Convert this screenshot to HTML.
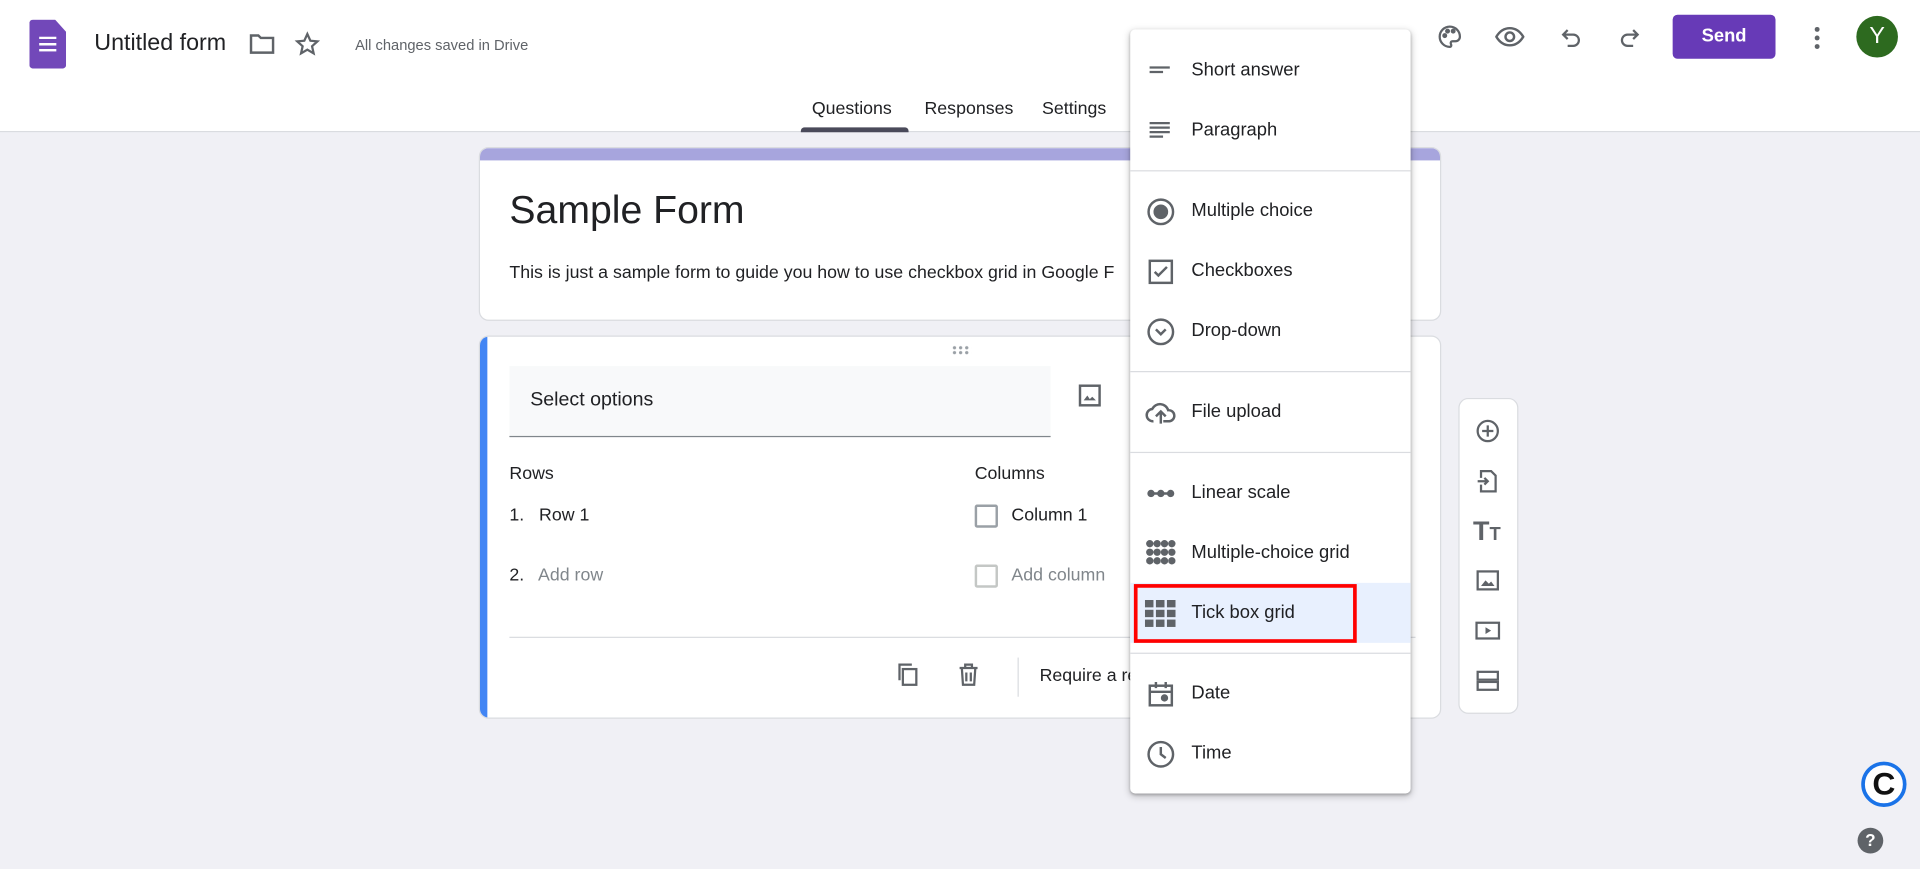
<!DOCTYPE html>
<html><head><meta charset="utf-8"><style>
*{box-sizing:border-box;margin:0;padding:0}
html,body{width:1920px;height:869px;overflow:hidden;background:#f0f0f5;font-family:"Liberation Sans",Arial,sans-serif;color:#202124}
#w{position:absolute;left:0;top:0;width:1568px;height:710px;transform:scale(1.22449);transform-origin:0 0}
.a{position:absolute}
.hdr{left:0;top:0;width:1568px;height:108px;background:#fff;border-bottom:1px solid #dadce0}
.t{white-space:nowrap}
svg.i{position:absolute;fill:none;stroke:#5f6368;stroke-width:2}
.card{background:#fff;border:1px solid #dadce0;border-radius:8px}
.menu{left:923px;top:24px;width:229px;height:624px;background:#fff;border-radius:4px;box-shadow:0 2px 6px rgba(0,0,0,.25),0 1px 2px rgba(0,0,0,.2)}
.mi{position:absolute;left:50px;font-size:15px;color:#202124;transform:translateY(-50%)}
.dv{position:absolute;left:0;width:229px;height:1px;background:#dadce0}
</style></head><body><div id="w">
<div class="a hdr"></div>
<div class="a" style="left:24px;top:16px;width:30px;height:40px;background:#7248b9;border-radius:3px;clip-path:polygon(0 0,70% 0,100% 25%,100% 100%,0 100%)"></div>
<div class="a" style="left:32px;top:30px;width:14px;height:12px;background:repeating-linear-gradient(#fff 0 2px,transparent 2px 5px)"></div>
<div class="a t" style="left:77px;top:25px;font-size:19px">Untitled form</div>
<svg class="i" style="left:203px;top:26px" width="22" height="20" viewBox="0 0 22 20"><path d="M2 3h6l2 2h10v12H2z"/></svg>
<svg class="i" style="left:240px;top:25px" width="22" height="22" viewBox="0 0 24 24"><path d="M12 3l2.7 6 6.3.6-4.8 4.3 1.4 6.4L12 17l-5.6 3.3 1.4-6.4L3 9.6 9.3 9z"/></svg>
<div class="a t" style="left:290px;top:30px;font-size:12px;color:#5f6368">All changes saved in Drive</div>
<div class="a t" style="left:663px;top:81px;font-size:14.5px;color:#202124">Questions</div>
<div class="a" style="left:654px;top:104px;width:88px;height:4px;background:#4a4a5a;border-radius:3px 3px 0 0"></div>
<div class="a t" style="left:755px;top:81px;font-size:14.5px">Responses</div>
<div class="a t" style="left:851px;top:81px;font-size:14.5px">Settings</div>
<svg class="i" style="left:1173px;top:19px" width="22" height="22" viewBox="0 0 24 24"><path d="M12 3a9 9 0 000 18c1.5 0 1.5-1.5 1-2.5-.6-1.2.2-2.5 1.5-2.5H17a4 4 0 004-4c0-5-4-9-9-9z"/><circle cx="7.5" cy="11" r="1.2" fill="#5f6368"/><circle cx="10" cy="7" r="1.2" fill="#5f6368"/><circle cx="15" cy="7" r="1.2" fill="#5f6368"/></svg>
<svg class="i" style="left:1221px;top:20px" width="24" height="20" viewBox="0 0 24 20"><path d="M1 10c3-5 7-7 11-7s8 2 11 7c-3 5-7 7-11 7S4 15 1 10z"/><circle cx="12" cy="10" r="3.5"/></svg>
<svg class="i" style="left:1272px;top:20px" width="22" height="22" viewBox="0 0 24 24"><path d="M9 5L5 9l4 4M5 9h9a5 5 0 010 10H9"/></svg>
<svg class="i" style="left:1320px;top:20px" width="22" height="22" viewBox="0 0 24 24"><path d="M15 5l4 4-4 4M19 9h-9a5 5 0 000 10h5"/></svg>
<div class="a" style="left:1366px;top:12px;width:84px;height:36px;background:#673ab7;border-radius:4px;color:#fff;font-size:15px;font-weight:bold;text-align:center;line-height:36px">Send</div>
<div class="a" style="left:1482px;top:22px;width:4px;height:4px;background:#5f6368;border-radius:50%;box-shadow:0 7px 0 #5f6368,0 14px 0 #5f6368"></div>
<div class="a" style="left:1516px;top:13px;width:34px;height:34px;border-radius:50%;background:#2d6a1f;color:#fff;font-size:19px;text-align:center;line-height:34px">Y</div>

<div class="a card" style="left:391px;top:120px;width:786px;height:142px;overflow:hidden"><div style="height:10px;background:#a7a5dd"></div></div>
<div class="a t" style="left:416px;top:153px;font-size:32px">Sample Form</div>
<div class="a t" style="left:416px;top:215px;font-size:14.5px">This is just a sample form to guide you how to use checkbox grid in Google F</div>

<div class="a card" style="left:391px;top:274px;width:786px;height:313px;overflow:hidden"><div style="position:absolute;left:0;top:0;width:6px;height:100%;background:#4285f4"></div></div>
<div class="a" style="left:777px;top:282px;width:16px;height:8px;background:radial-gradient(circle,#9aa0a6 1.2px,transparent 1.5px) 0 0/5px 4px"></div>
<div class="a" style="left:416px;top:299px;width:442px;height:58px;background:#f8f9fa;border-bottom:1px solid #80868b"></div>
<div class="a t" style="left:433px;top:318px;font-size:16px">Select options</div>
<svg class="i" style="left:880px;top:313px" width="20" height="20" viewBox="0 0 20 20"><rect x="2" y="2" width="16" height="16"/><path d="M5 14l3-4 2 3 2-2 3 3z" fill="#5f6368" stroke="none"/></svg>
<div class="a t" style="left:416px;top:379px;font-size:14.5px">Rows</div>
<div class="a t" style="left:796px;top:379px;font-size:14.5px">Columns</div>
<div class="a t" style="left:416px;top:413px;font-size:14.5px">1.&nbsp;&nbsp; Row 1</div>
<div class="a t" style="left:416px;top:462px;font-size:14.5px;color:#202124">2.&nbsp;&nbsp; <span style="color:#80868b">Add row</span></div>
<div class="a" style="left:796px;top:412px;width:19px;height:19px;border:2px solid #9aa0a6;border-radius:2px"></div>
<div class="a t" style="left:826px;top:413px;font-size:14.5px">Column 1</div>
<div class="a" style="left:796px;top:461px;width:19px;height:19px;border:2px solid #c4c7c5;border-radius:2px"></div>
<div class="a t" style="left:826px;top:462px;font-size:14.5px;color:#80868b">Add column</div>
<div class="a" style="left:416px;top:520px;width:740px;height:1px;background:#dadce0"></div>
<svg class="i" style="left:730px;top:540px" width="22" height="22" viewBox="0 0 24 24"><rect x="8" y="7" width="12" height="14"/><path d="M5 17V3h11"/></svg>
<svg class="i" style="left:780px;top:540px" width="22" height="22" viewBox="0 0 24 24"><path d="M4 6h16M9 6V3h6v3M6 6l1 15h10l1-15M10 10v8M14 10v8"/></svg>
<div class="a" style="left:831px;top:537px;width:1px;height:32px;background:#dadce0"></div>
<div class="a t" style="left:849px;top:544px;font-size:14.5px">Require a re</div>

<div class="a card" style="left:1191px;top:325px;width:49px;height:258px;border-radius:8px"></div>
<svg class="i" style="left:1204px;top:341px" width="22" height="22" viewBox="0 0 24 24"><circle cx="12" cy="12" r="9"/><path d="M12 7v10M7 12h10"/></svg>
<svg class="i" style="left:1204px;top:382px" width="22" height="22" viewBox="0 0 24 24"><path d="M6 9V3h9l4 4v14H6v-6M3 12h9M9 9l3 3-3 3"/></svg>
<div class="a t" style="left:1203px;top:421px;font-size:22px;font-weight:bold;color:#5f6368">T<span style="font-size:15px">T</span></div>
<svg class="i" style="left:1204px;top:463px" width="22" height="22" viewBox="0 0 24 24"><rect x="3" y="4" width="18" height="16"/><path d="M6 17l4-5 3 3 2-2 3 4z" fill="#5f6368" stroke="none"/></svg>
<svg class="i" style="left:1204px;top:504px" width="22" height="22" viewBox="0 0 24 24"><rect x="2" y="5" width="20" height="14"/><path d="M10 9v6l5-3z" fill="#5f6368" stroke="none"/></svg>
<svg class="i" style="left:1204px;top:545px" width="22" height="22" viewBox="0 0 24 24"><rect x="3" y="4" width="18" height="7"/><rect x="3" y="13" width="18" height="7"/></svg>

<div class="a menu">
<div style="position:absolute;left:0;top:452px;width:229px;height:49px;background:#e8f0fe"></div>
<svg class="i" style="left:14px;top:22px" width="22" height="22" viewBox="0 0 24 24"><path d="M2 10h18M2 14h12"/></svg>
<div class="mi" style="top:33px">Short answer</div>
<svg class="i" style="left:14px;top:72px" width="22" height="22" viewBox="0 0 24 24"><path d="M2 5h18M2 9h18M2 13h18M2 17h12"/></svg>
<div class="mi" style="top:82px">Paragraph</div>
<div class="dv" style="top:115px"></div>
<svg class="i" style="left:13px;top:137px" width="24" height="24" viewBox="0 0 24 24"><circle cx="12" cy="12" r="10"/><circle cx="12" cy="12" r="5" fill="#5f6368"/></svg>
<div class="mi" style="top:148px">Multiple choice</div>
<svg class="i" style="left:13px;top:186px" width="24" height="24" viewBox="0 0 24 24"><rect x="3" y="3" width="18" height="18"/><path d="M7 12l3 3 7-7"/></svg>
<div class="mi" style="top:197px">Checkboxes</div>
<svg class="i" style="left:13px;top:235px" width="24" height="24" viewBox="0 0 24 24"><circle cx="12" cy="12" r="10"/><path d="M8 10l4 4 4-4"/></svg>
<div class="mi" style="top:246px">Drop-down</div>
<div class="dv" style="top:279px"></div>
<svg class="i" style="left:12px;top:301px" width="26" height="24" viewBox="0 0 26 24"><path d="M7 19a5 5 0 01-1-10 7 7 0 0113 1 4.5 4.5 0 011 9h-5M13 21v-9M9 15l4-4 4 4"/></svg>
<div class="mi" style="top:312px">File upload</div>
<div class="dv" style="top:345px"></div>
<svg class="i" style="left:13px;top:367px" width="24" height="24" viewBox="0 0 24 24"><path d="M3 12h18"/><circle cx="4" cy="12" r="2" fill="#5f6368"/><circle cx="12" cy="12" r="2" fill="#5f6368"/><circle cx="20" cy="12" r="2" fill="#5f6368"/></svg>
<div class="mi" style="top:378px">Linear scale</div>
<svg style="position:absolute;left:12px;top:416px" width="26" height="22" viewBox="0 0 26 22" fill="#5f6368"><circle cx="4" cy="4" r="3"/><circle cx="10" cy="4" r="3"/><circle cx="16" cy="4" r="3"/><circle cx="22" cy="4" r="3"/><circle cx="4" cy="11" r="3"/><circle cx="10" cy="11" r="3"/><circle cx="16" cy="11" r="3"/><circle cx="22" cy="11" r="3"/><circle cx="4" cy="18" r="3"/><circle cx="10" cy="18" r="3"/><circle cx="16" cy="18" r="3"/><circle cx="22" cy="18" r="3"/></svg>
<div class="mi" style="top:427px">Multiple-choice grid</div>
<svg style="position:absolute;left:12px;top:466px" width="26" height="22" viewBox="0 0 26 22" fill="#5f6368"><rect x="0" y="0" width="7" height="6"/><rect x="9" y="0" width="7" height="6"/><rect x="18" y="0" width="7" height="6"/><rect x="0" y="8" width="7" height="6"/><rect x="9" y="8" width="7" height="6"/><rect x="18" y="8" width="7" height="6"/><rect x="0" y="16" width="7" height="6"/><rect x="9" y="16" width="7" height="6"/><rect x="18" y="16" width="7" height="6"/></svg>
<div class="mi" style="top:476px">Tick box grid</div>
<div class="dv" style="top:509px"></div>
<svg class="i" style="left:13px;top:531px" width="24" height="24" viewBox="0 0 24 24"><rect x="3" y="5" width="18" height="16"/><path d="M3 10h18M8 2v5M16 2v5"/><circle cx="15" cy="15" r="2" fill="#5f6368"/></svg>
<div class="mi" style="top:542px">Date</div>
<svg class="i" style="left:13px;top:580px" width="24" height="24" viewBox="0 0 24 24"><circle cx="12" cy="12" r="10"/><path d="M12 6v6l4 3"/></svg>
<div class="mi" style="top:591px">Time</div>
</div>
<div class="a" style="left:926px;top:477px;width:182px;height:48px;border:3px solid #f00"></div>

<div class="a" style="left:1520px;top:622px;width:37px;height:37px;border-radius:50%;border:3px solid #1a73e8;background:#fff;text-align:center;line-height:31px;font-size:26px;font-weight:bold;color:#111">C</div>
<div class="a" style="left:1517px;top:676px;width:21px;height:21px;border-radius:50%;background:#5f6368;color:#fff;text-align:center;line-height:21px;font-size:14px;font-weight:bold">?</div>
</div></body></html>
